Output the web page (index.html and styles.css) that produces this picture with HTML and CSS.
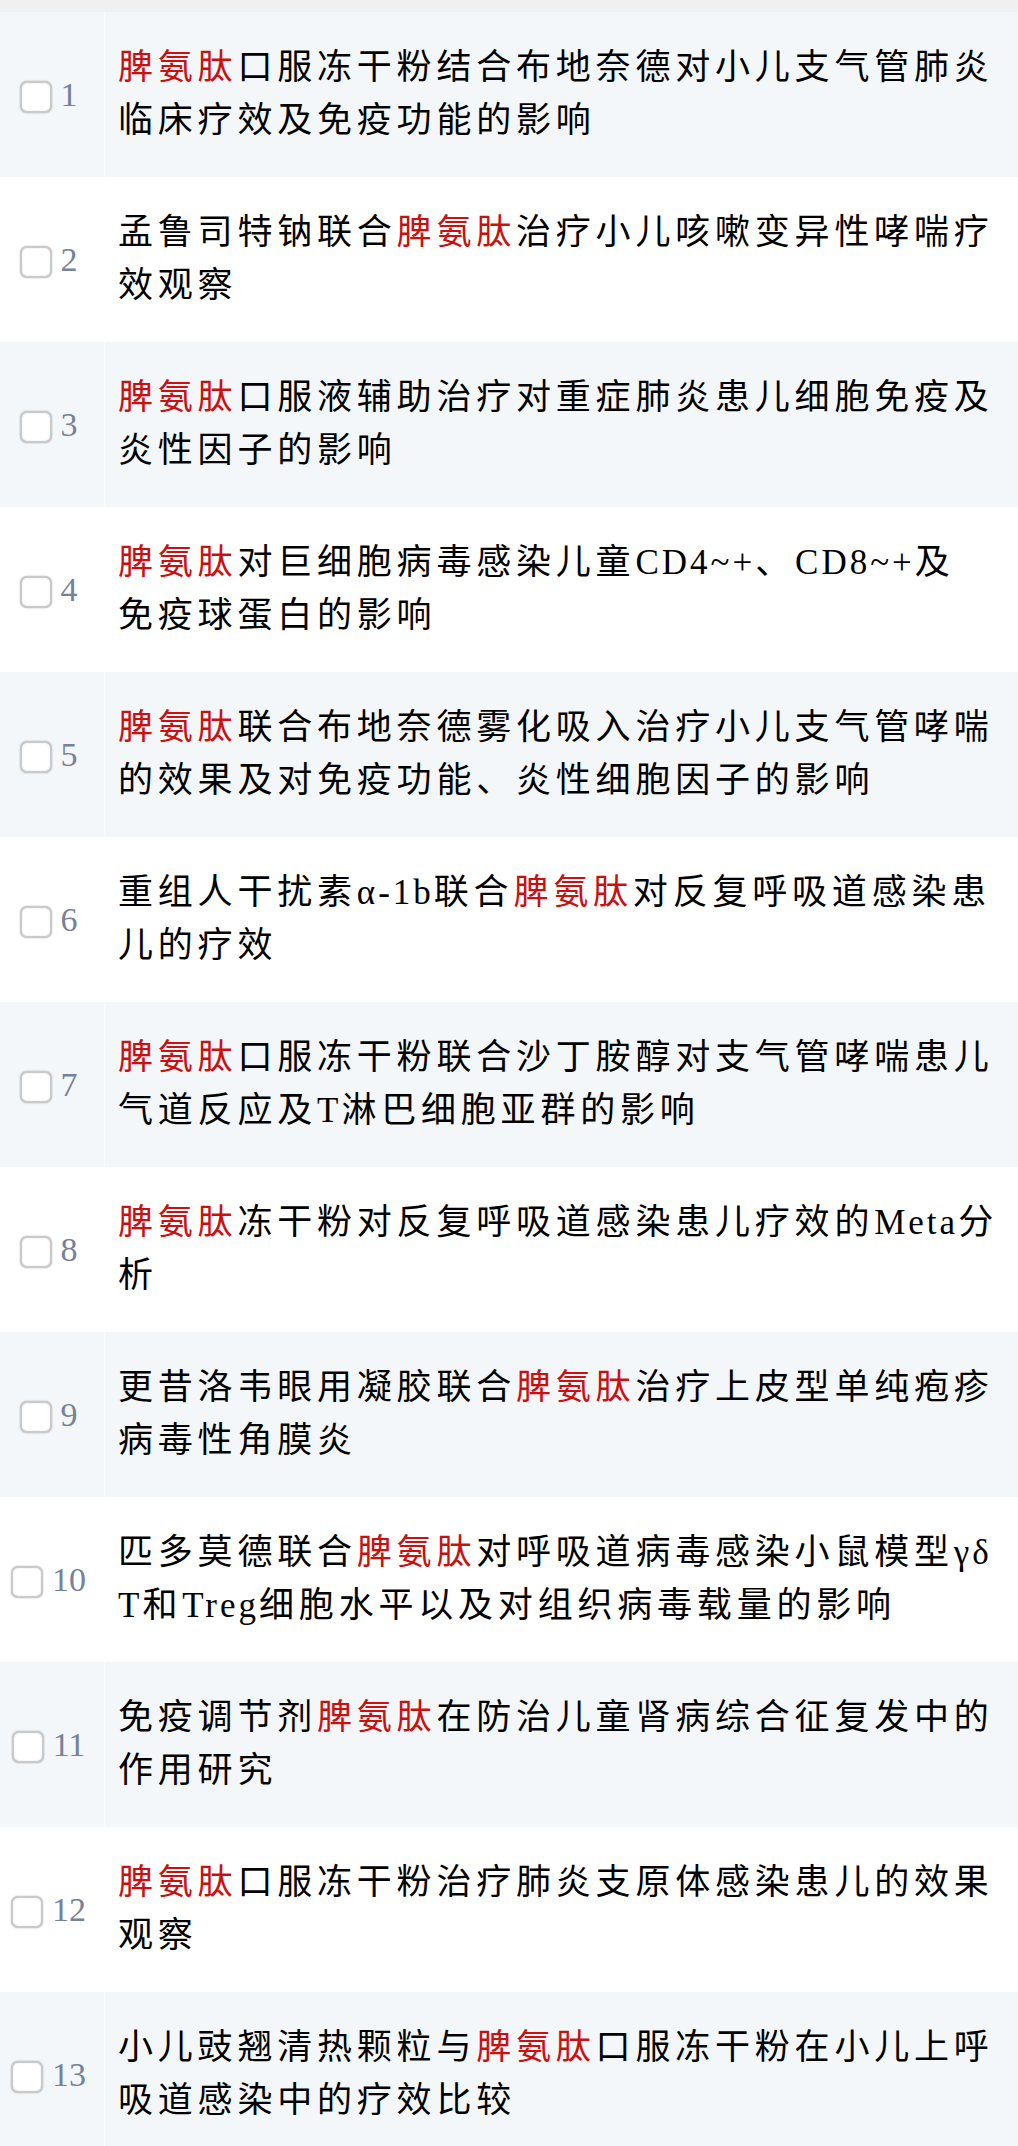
FILE: index.html
```html
<!DOCTYPE html>
<html lang="zh-CN">
<head>
<meta charset="utf-8">
<title>文献列表</title>
<link rel="stylesheet" href="styles.css">
</head>
<body>
<div class="topband"></div>
<div class="list">
  <div class="row odd"><div class="idx"><input type="checkbox" class="chk"><span class="num">1</span></div><div class="title"><span class="hl">脾氨肽</span>口服冻干粉结合布地奈德对小儿支气管肺炎<br>临床疗效及免疫功能的影响</div></div>
  <div class="row"><div class="idx"><input type="checkbox" class="chk"><span class="num">2</span></div><div class="title">孟鲁司特钠联合<span class="hl">脾氨肽</span>治疗小儿咳嗽变异性哮喘疗<br>效观察</div></div>
  <div class="row odd"><div class="idx"><input type="checkbox" class="chk"><span class="num">3</span></div><div class="title"><span class="hl">脾氨肽</span>口服液辅助治疗对重症肺炎患儿细胞免疫及<br>炎性因子的影响</div></div>
  <div class="row"><div class="idx"><input type="checkbox" class="chk"><span class="num">4</span></div><div class="title"><span class="hl">脾氨肽</span>对巨细胞病毒感染儿童<span class="lat">CD4~+</span>、<span class="lat">CD8~+</span>及<br>免疫球蛋白的影响</div></div>
  <div class="row odd"><div class="idx"><input type="checkbox" class="chk"><span class="num">5</span></div><div class="title"><span class="hl">脾氨肽</span>联合布地奈德雾化吸入治疗小儿支气管哮喘<br>的效果及对免疫功能、炎性细胞因子的影响</div></div>
  <div class="row"><div class="idx"><input type="checkbox" class="chk"><span class="num">6</span></div><div class="title">重组人干扰素<span class="lat">α-1b</span>联合<span class="hl">脾氨肽</span>对反复呼吸道感染患<br>儿的疗效</div></div>
  <div class="row odd"><div class="idx"><input type="checkbox" class="chk"><span class="num">7</span></div><div class="title"><span class="hl">脾氨肽</span>口服冻干粉联合沙丁胺醇对支气管哮喘患儿<br>气道反应及<span class="lat">T</span>淋巴细胞亚群的影响</div></div>
  <div class="row"><div class="idx"><input type="checkbox" class="chk"><span class="num">8</span></div><div class="title"><span class="hl">脾氨肽</span>冻干粉对反复呼吸道感染患儿疗效的<span class="lat">Meta</span>分<br>析</div></div>
  <div class="row odd"><div class="idx"><input type="checkbox" class="chk"><span class="num">9</span></div><div class="title">更昔洛韦眼用凝胶联合<span class="hl">脾氨肽</span>治疗上皮型单纯疱疹<br>病毒性角膜炎</div></div>
  <div class="row"><div class="idx"><input type="checkbox" class="chk"><span class="num">10</span></div><div class="title">匹多莫德联合<span class="hl">脾氨肽</span>对呼吸道病毒感染小鼠模型<span class="lat">γδ</span><br><span class="lat">T</span>和<span class="lat">Treg</span>细胞水平以及对组织病毒载量的影响</div></div>
  <div class="row odd"><div class="idx"><input type="checkbox" class="chk"><span class="num">11</span></div><div class="title">免疫调节剂<span class="hl">脾氨肽</span>在防治儿童肾病综合征复发中的<br>作用研究</div></div>
  <div class="row"><div class="idx"><input type="checkbox" class="chk"><span class="num">12</span></div><div class="title"><span class="hl">脾氨肽</span>口服冻干粉治疗肺炎支原体感染患儿的效果<br>观察</div></div>
  <div class="row odd"><div class="idx"><input type="checkbox" class="chk"><span class="num">13</span></div><div class="title">小儿豉翘清热颗粒与<span class="hl">脾氨肽</span>口服冻干粉在小儿上呼<br>吸道感染中的疗效比较</div></div>
</div>
</body>
</html>
```

FILE: styles.css
```css
html, body {
  margin: 0;
  padding: 0;
  background: #ffffff;
}

body {
  font-family: "Liberation Serif", "Noto Sans CJK SC", serif;
  color: #000;
  overflow: hidden;
}

.topband {
  height: 12px;
  background: #f0f0f0;
}

.list {
  display: flex;
  flex-direction: column;
}

.row {
  display: flex;
  align-items: stretch;
  background: #ffffff;
}

.row.odd {
  background: #f4f7fa;
}

.idx {
  width: 97px;
  padding-right: 7px;
  flex: 0 0 auto;
  display: flex;
  align-items: center;
  justify-content: center;
  gap: 9px;
  border-right: 1px solid rgba(255, 255, 255, 0.55);
}

.chk {
  appearance: none;
  -webkit-appearance: none;
  margin: 4px 0 0 0;
  width: 32px;
  height: 32px;
  box-sizing: border-box;
  border: 2px solid #cacaca;
  border-radius: 7px;
  background: #ffffff;
  box-shadow: 0 0 1.5px rgba(0, 0, 0, 0.35), inset 0 0 2px rgba(0, 0, 0, 0.12);
  flex: 0 0 auto;
}

.num {
  font-family: "Liberation Serif", serif;
  font-size: 34px;
  line-height: 1;
  color: #76829a;
}

.title {
  flex: 1 1 auto;
  padding: 30px 10px 30px 13px;
  font-size: 35px;
  letter-spacing: 4.8px;
  line-height: 52.5px;
  white-space: nowrap;
}

.lat {
  letter-spacing: 3px;
}

.hl {
  color: #cc1010;
}
```
